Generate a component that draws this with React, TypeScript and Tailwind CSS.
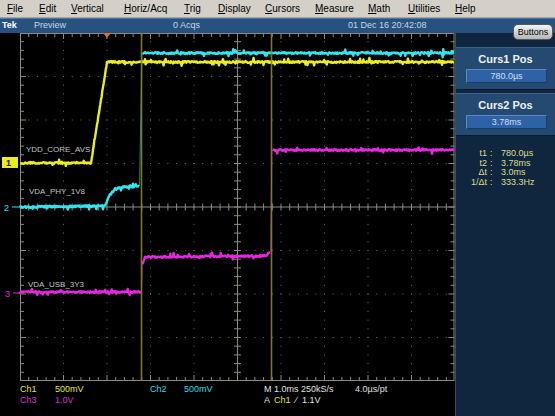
import React from 'react';

// graticule geometry (svg coords): 10 x 8 divisions of 43.5px, left edge at x=20
const GX = 20;
const DIV = 43.5;
const MINOR = DIV / 5;
const GW = DIV * 10;
const GH = DIV * 8;

const GRID = '#8c8a80';
const DOT = '#6c6c66';

const YEL = '#ecec22';
const CYN = '#32e6f0';
const MAG = '#e528e0';

function mulberry32(a: number) {
  return () => {
    a |= 0;
    a = (a + 0x6d2b79f5) | 0;
    let t = Math.imul(a ^ (a >>> 15), 1 | a);
    t = (t + Math.imul(t ^ (t >>> 7), 61 | t)) ^ t;
    return ((t ^ (t >>> 14)) >>> 0) / 4294967296;
  };
}

function tracePoints(pts: [number, number][], seed: number): string {
  const r = mulberry32(seed);
  const out: string[] = [];
  for (let i = 0; i < pts.length - 1; i++) {
    const [x1, y1] = pts[i];
    const [x2, y2] = pts[i + 1];
    const n = Math.max(1, Math.round((x2 - x1) * 1.5));
    for (let s = i === 0 ? 0 : 1; s <= n; s++) {
      const t = s / n;
      const x = x1 + (x2 - x1) * t;
      let y = y1 + (y2 - y1) * t;
      if (x2 - x1 > 3) {
        y += (r() - 0.5) * 1.8;
        if (r() < 0.08) y += (r() < 0.5 ? -1 : 1) * (1.2 + r() * 2.2);
      }
      out.push(`${x.toFixed(1)},${y.toFixed(1)}`);
    }
  }
  return out.join(' ');
}

type Trace = { color: string; pieces: [number, number][][]; jumps: [number, number, number, number][] };

const traces: Trace[] = [
  {
    color: MAG,
    pieces: [
      [[20, 259], [141, 259]],
      [[142.5, 231], [145, 224], [266, 223], [270, 219]],
      [[272.5, 117], [454, 117]],
    ],
    jumps: [[141.5, 259, 142.5, 231], [270.5, 219, 272, 117]],
  },
  {
    color: CYN,
    pieces: [
      [[20, 174], [105, 173], [109, 163], [115, 156], [125, 154], [139, 153]],
      [[142.5, 20], [454, 20]],
    ],
    jumps: [[139.5, 153, 142, 20]],
  },
  {
    color: YEL,
    pieces: [[[20, 130], [91, 130], [107, 29], [454, 29]]],
    jumps: [],
  },
];

const Graticule = () => {
  const els: React.ReactNode[] = [];
  // dotted division lines
  for (let i = 1; i < 10; i++) {
    if (i === 5) continue;
    const x = GX + i * DIV;
    for (let k = 1; k < 40; k++) {
      els.push(<rect key={`v${i}-${k}`} x={x - 0.5} y={k * MINOR - 0.5} width={1} height={1} fill={DOT} />);
    }
  }
  for (let j = 1; j < 8; j++) {
    if (j === 4) continue;
    const y = j * DIV;
    for (let k = 1; k < 50; k++) {
      els.push(<rect key={`h${j}-${k}`} x={GX + k * MINOR - 0.5} y={y - 0.5} width={1} height={1} fill={DOT} />);
    }
  }
  // frame ticks and centre ticks
  for (let k = 1; k < 50; k++) {
    const x = GX + k * MINOR;
    const len = k % 5 === 0 ? 6 : 4;
    els.push(<line key={`tt${k}`} x1={x} y1={0} x2={x} y2={len} stroke={GRID} />);
    els.push(<line key={`tb${k}`} x1={x} y1={GH} x2={x} y2={GH - len} stroke={GRID} />);
    els.push(<line key={`tc${k}`} x1={x} y1={GH / 2 - 3.5} x2={x} y2={GH / 2 + 3.5} stroke={GRID} />);
  }
  for (let k = 1; k < 40; k++) {
    const y = k * MINOR;
    const len = k % 5 === 0 ? 6 : 4;
    els.push(<line key={`tl${k}`} x1={GX} y1={y} x2={GX + len} y2={y} stroke={GRID} />);
    els.push(<line key={`tr${k}`} x1={GX + GW - 0.5} y1={y} x2={GX + GW - 0.5 - len} y2={y} stroke={GRID} />);
    els.push(<line key={`tv${k}`} x1={GX + GW / 2 - 3.5} y1={y} x2={GX + GW / 2 + 3.5} y2={y} stroke={GRID} />);
  }
  return (
    <g>
      {els}
      <rect x={GX + 0.5} y={0.5} width={GW - 1.5} height={GH - 1} fill="none" stroke={GRID} />
      <line x1={GX + GW / 2} y1={0} x2={GX + GW / 2} y2={GH} stroke={GRID} />
      <line x1={GX} y1={GH / 2} x2={GX + GW} y2={GH / 2} stroke={GRID} />
    </g>
  );
};

const ScopeScreen = () => (
  <svg width={455} height={348} className="block" style={{ fontFamily: '"Liberation Sans", sans-serif' }}>
    <Graticule />
    {/* trigger position */}
    <polygon points="103,0 111,0 107,5" fill="#e0663a" />
    {/* traces */}
    {traces.map((tr, ti) => (
      <g key={ti}>
        {tr.jumps.map(([x1, y1, x2, y2], ji) => (
          <line key={ji} x1={x1} y1={y1} x2={x2} y2={y2} stroke={tr.color} strokeWidth={1} opacity={0.55} />
        ))}
        {tr.pieces.map((p, pi) => (
          <polyline
            key={pi}
            points={tracePoints(p, 7 + ti * 31 + pi * 11)}
            fill="none"
            stroke={tr.color}
            strokeWidth={2.4}
            strokeLinejoin="round"
          />
        ))}
      </g>
    ))}
    {/* cursors */}
    <line x1={141.5} y1={0} x2={141.5} y2={GH} stroke="#8a8438" strokeWidth={1.6} opacity={0.9} />
    <line x1={271.5} y1={0} x2={271.5} y2={GH} stroke="#8a8438" strokeWidth={1.6} opacity={0.9} />
    {/* trace labels */}
    <text x={26} y={119} fontSize={8} fill="#c4c4c0">YDD_CORE_AVS</text>
    <text x={29} y={161} fontSize={8} fill="#c4c4c0">VDA_PHY_1V8</text>
    <text x={28} y={254} fontSize={8} fill="#c4c4c0">VDA_USB_3Y3</text>
    {/* channel ground markers */}
    <rect x={2} y={124} width={16} height={11} fill={YEL} />
    <text x={6} y={133} fontSize={9} fontWeight={700} fill="#202000">1</text>
    <line x1={12} y1={174} x2={20} y2={174} stroke={CYN} />
    <text x={4} y={178} fontSize={9} fill={CYN}>2</text>
    <line x1={13} y1={260} x2={20} y2={260} stroke={MAG} />
    <text x={5} y={264} fontSize={9} fill={MAG}>3</text>
  </svg>
);

const menus = [
  ['File', 32],
  ['Edit', 32],
  ['Vertical', 53],
  ['Horiz/Acq', 60],
  ['Trig', 34],
  ['Display', 47],
  ['Cursors', 50],
  ['Measure', 53],
  ['Math', 40],
  ['Utilities', 47],
  ['Help', 40],
] as const;

const CursorBox = ({ title, value }: { title: string; value: string }) => (
  <div className="bg-[#244a71] border-t border-[#3a6390] border-b border-b-[#0a1a2c] pt-[5px] pb-[6px]">
    <div className="text-center text-[11px] leading-[12px] font-bold text-[#eef2f8]">{title}</div>
    <div className="mt-[4px] ml-[10px] w-[81px] h-[14px] bg-[#2e62a6] border border-[#5f88bd] border-b-[#1b3c66] border-r-[#1b3c66] text-center text-[9px] leading-[12px] text-[#d2dff0]">
      {value}
    </div>
  </div>
);

const readouts = [
  ['t1', '780.0µs'],
  ['t2', '3.78ms'],
  ['Δt', '3.0ms'],
  ['1/Δt', '333.3Hz'],
];

export default function App() {
  return (
    <div className="relative w-[555px] h-[416px] overflow-hidden bg-black font-['Liberation_Sans',sans-serif]">
      {/* menu bar */}
      <div className="h-[18px] bg-[#d4d0c8] flex items-center pl-[7px] text-[10px] text-black border-b border-[#a8a49c]">
        {menus.map(([name, w]) => (
          <div key={name} style={{ width: w }} className="shrink-0">
            <span className="underline underline-offset-1">{name[0]}</span>
            {name.slice(1)}
          </div>
        ))}
      </div>

      {/* status bar */}
      <div className="h-[15px] bg-[#27527f] border-t border-[#4a76a4] flex items-center text-[9px] text-[#c9d5e2]">
        <span className="w-[34px] pl-[2px] font-bold text-white">Tek</span>
        <span className="w-[139px]">Preview</span>
        <span className="w-[175px]">0 Acqs</span>
        <span>01 Dec 16 20:42:08</span>
      </div>

      <div className="flex h-[383px]">
        {/* acquisition display */}
        <div className="w-[455px] flex flex-col">
          <ScopeScreen />
          <div className="flex-1 pl-[20px] pt-[3px] text-[9px] leading-[11px]">
            <div className="flex">
              <span className="w-[35px] text-[#e6e640]">Ch1</span>
              <span className="w-[95px] text-[#e6e640]">500mV</span>
              <span className="w-[34px] text-[#3ad8e8]">Ch2</span>
              <span className="w-[80px] text-[#3ad8e8]">500mV</span>
              <span className="w-[91px] text-[#e0e0e0]">M 1.0ms 250kS/s</span>
              <span className="text-[#e0e0e0]">4.0µs/pt</span>
            </div>
            <div className="flex">
              <span className="w-[35px] text-[#d430d4]">Ch3</span>
              <span className="w-[209px] text-[#d430d4]">1.0V</span>
              <span className="text-[#e0e0e0]">A</span>
              <span className="ml-[4px] text-[#e6e640]">Ch1</span>
              <span className="ml-[5px] text-[#e0e0e0]">∕</span>
              <span className="ml-[5px] text-[#e0e0e0]">1.1V</span>
            </div>
          </div>
        </div>

        {/* side menu */}
        <div className="w-[100px] bg-[#10263f] border-l border-[#2c4c70] pt-[14px]">
          <CursorBox title="Curs1 Pos" value="780.0µs" />
          <div className="h-[3px]" />
          <CursorBox title="Curs2 Pos" value="3.78ms" />
          <div className="mt-[13px] grid grid-cols-[31px_14px_1fr] text-[9px] leading-[9.7px] text-[#dcdc8c]">
            {readouts.map(([k, v]) => (
              <React.Fragment key={k}>
                <span className="text-right">{k}</span>
                <span className="pl-[3px]">:</span>
                <span>{v}</span>
              </React.Fragment>
            ))}
          </div>
        </div>
      </div>

      {/* side menu toggle */}
      <button className="absolute left-[513px] top-[24px] w-[40px] h-[16px] rounded-[5px] border border-[#55585c] bg-gradient-to-b from-[#f4f4f4] to-[#b4b6b8] text-[9px] leading-[14px] text-black text-center">
        Buttons
      </button>
    </div>
  );
}
